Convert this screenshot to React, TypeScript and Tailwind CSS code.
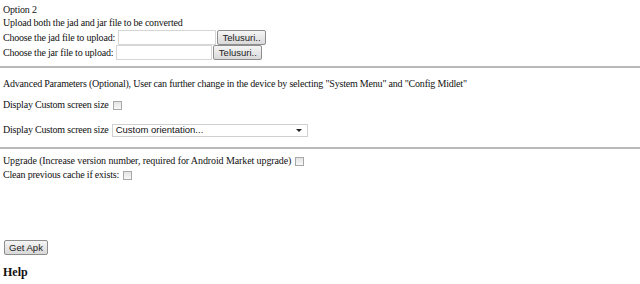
const serif = { fontFamily: '"Liberation Serif", "Times New Roman", serif' };

function Check() {
  return (
    <input
      type="checkbox"
      className="appearance-none inline-block align-middle w-[9px] h-[9px] border border-[#a8a8a8] bg-gradient-to-b from-[#e4e4e4] to-[#f8f8f8] ml-[4px]"
    />
  );
}

function GrayButton({ label, className = '' }: { label: string; className?: string }) {
  return (
    <button
      type="button"
      className={`h-[15px] px-[3px] whitespace-nowrap text-[9.5px] leading-none tracking-normal text-[#222] border border-[#8e8e8e] rounded-[2px] bg-gradient-to-b from-[#f5f5f5] to-[#d9d9d9] font-['Liberation_Sans',Arial,sans-serif] ${className}`}
    >
      {label}
    </button>
  );
}

function FileRow({ label, inputW }: { label: string; inputW: string }) {
  return (
    <div className="flex items-center h-[15px]">
      <span>{label}</span>
      <input type="text" className={`${inputW} h-[15px] ml-[3px] border border-[#d6d6d6] bg-white`} />
      <GrayButton label="Telusuri.." className="ml-[1px] w-[49px]" />
    </div>
  );
}

export default function App() {
  return (
    <div
      className="w-[640px] h-[284px] bg-white text-[#111] text-[10px] tracking-[-0.2px] leading-[14px] overflow-hidden"
      style={serif}
    >
      <div className="pl-[3px] pt-[2px]">
        <div className="pt-[1px] h-[14px] leading-[13px]">Option 2</div>
        <div>Upload both the jad and jar file to be converted</div>
        <FileRow label="Choose the jad file to upload:" inputW="w-[98px]" />
        <FileRow label="Choose the jar file to upload:" inputW="w-[96px]" />
      </div>
      <div className="mt-[6px] h-[2px] bg-[#b9b9b9]" />
      <div className="pl-[3px]">
        <div className="mt-[9px]">
          Advanced Parameters (Optional), User can further change in the device by selecting "System Menu" and "Config Midlet"
        </div>
        <div className="mt-[7px] flex items-center h-[14px]">
          <span>Display Custom screen size</span>
          <Check />
        </div>
        <div className="mt-[11px] flex items-center h-[14px]">
          <span>Display Custom screen size</span>
          <div className="ml-[3px] w-[196px] h-[13px] border border-[#d0d0d0] bg-white flex items-center justify-between pl-[3px] pr-[5px] font-['Liberation_Sans',Arial,sans-serif] tracking-normal text-[9.5px]">
            <span>Custom orientation...</span>
            <svg width="6" height="3" viewBox="0 0 6 3">
              <path d="M0 0h6L3 3z" fill="#222" />
            </svg>
          </div>
        </div>
      </div>
      <div className="mt-[10px] h-[2px] bg-[#b9b9b9]" />
      <div className="pl-[3px] pt-[5px]">
        <div className="flex items-center h-[14px]">
          <span className="tracking-[-0.1px]">Upgrade (Increase version number, required for Android Market upgrade)</span>
          <Check />
        </div>
        <div className="flex items-center h-[14px]">
          <span>Clean previous cache if exists:</span>
          <Check />
        </div>
        <div className="mt-[58px] pl-[1px] flex">
          <GrayButton label="Get Apk" className="h-[14px] w-[44px]" />
        </div>
        <div className="mt-[10px] font-bold text-[12px] tracking-normal">Help</div>
      </div>
    </div>
  );
}
